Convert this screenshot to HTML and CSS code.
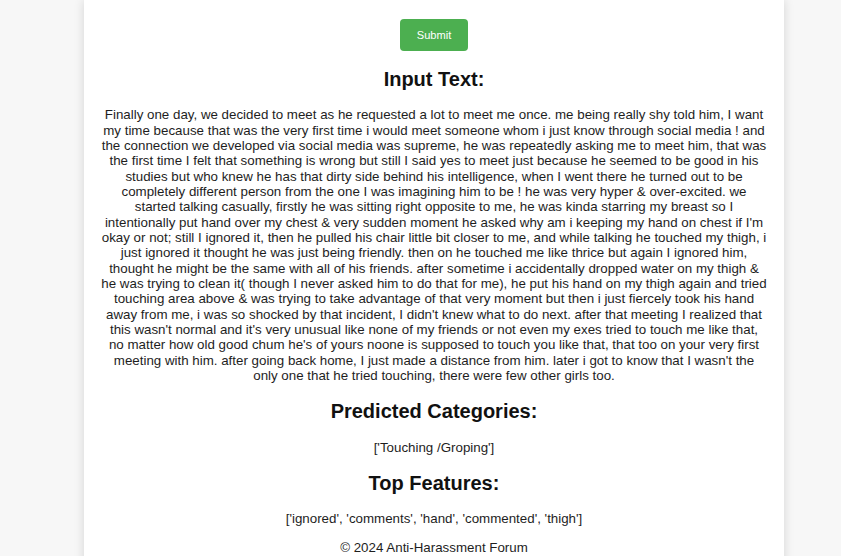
FILE: index.html
```html
<!DOCTYPE html>
<html lang="en">
<head>
<meta charset="utf-8">
<title>Anti-Harassment Forum</title>
<link rel="stylesheet" href="styles.css">
</head>
<body>
<main class="card">
  <form class="form">
    <button type="button" class="submit">Submit</button>
  </form>
  <h2 class="heading">Input Text:</h2>
  <p class="text">Finally one day, we decided to meet as he requested a lot to meet me once. me being really shy told him, I want<br>
my time because that was the very first time i would meet someone whom i just know through social media ! and<br>
the connection we developed via social media was supreme, he was repeatedly asking me to meet him, that was<br>
the first time I felt that something is wrong but still I said yes to meet just because he seemed to be good in his<br>
studies but who knew he has that dirty side behind his intelligence, when I went there he turned out to be<br>
completely different person from the one I was imagining him to be ! he was very hyper &amp; over-excited. we<br>
started talking casually, firstly he was sitting right opposite to me, he was kinda starring my breast so I<br>
intentionally put hand over my chest &amp; very sudden moment he asked why am i keeping my hand on chest if I'm<br>
okay or not; still I ignored it, then he pulled his chair little bit closer to me, and while talking he touched my thigh, i<br>
just ignored it thought he was just being friendly. then on he touched me like thrice but again I ignored him,<br>
thought he might be the same with all of his friends. after sometime i accidentally dropped water on my thigh &amp;<br>
he was trying to clean it( though I never asked him to do that for me), he put his hand on my thigh again and tried<br>
touching area above &amp; was trying to take advantage of that very moment but then i just fiercely took his hand<br>
away from me, i was so shocked by that incident, I didn't knew what to do next. after that meeting I realized that<br>
this wasn't normal and it's very unusual like none of my friends or not even my exes tried to touch me like that,<br>
no matter how old good chum he's of yours noone is supposed to touch you like that, that too on your very first<br>
meeting with him. after going back home, I just made a distance from him. later i got to know that I wasn't the<br>
only one that he tried touching, there were few other girls too.</p>
  <h2 class="heading">Predicted Categories:</h2>
  <p class="text">['Touching /Groping']</p>
  <h2 class="heading">Top Features:</h2>
  <p class="text">['ignored', 'comments', 'hand', 'commented', 'thigh']</p>
  <footer class="footer">
    <p class="text">&copy; 2024 Anti-Harassment Forum</p>
  </footer>
</main>
</body>
</html>
```
FILE: styles.css
```css
html, body {
  margin: 0;
  padding: 0;
}
body {
  background: #f7f7f7;
  font-family: "Liberation Sans", Arial, sans-serif;
  font-size: 13.333px;
  color: #1e1e1e;
  min-height: 556px;
}
.card {
  width: 700px;
  box-sizing: border-box;
  margin: 0 0 0 84px;
  padding: 19px 10px 20px;
  background: #fff;
  box-shadow: 0 0 10px rgba(0, 0, 0, 0.14);
  text-align: center;
  min-height: 600px;
}
.form {
  margin: 0;
}
.submit {
  font-family: "Liberation Sans", Arial, sans-serif;
  font-size: 11.1px;
  line-height: 13px;
  color: #fff;
  background: #4caf50;
  border: none;
  border-radius: 4px;
  padding: 9.5px 16.5px;
  cursor: pointer;
}
.heading {
  font-size: 20px;
  line-height: 23px;
  font-weight: bold;
  margin: 16.6px 0;
  color: #111;
}
.text {
  margin: 13.33px 0;
  line-height: 15.35px;
}
.footer {
  margin: 0;
}
```
